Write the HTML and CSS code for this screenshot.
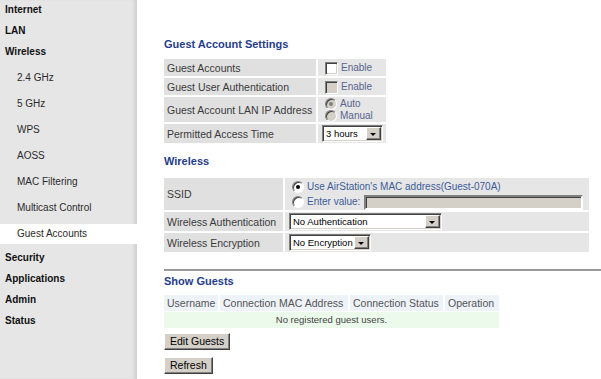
FILE: index.html
```html
<!DOCTYPE html>
<html lang="en">
<head>
    <meta charset="UTF-8" />
    <title>Guest Accounts - AirStation</title>
    <link rel="stylesheet" href="styles.css">
</head>
<body>
    <div class="page">
        <aside class="sidebar">
            <ul class="menu">
                <li class="menu-main">Internet</li>
                <li class="menu-main">LAN</li>
                <li class="menu-main">Wireless</li>
                <li class="menu-sub-list">
                    <ul>
                        <li class="menu-sub"><a>2.4 GHz</a></li>
                        <li class="menu-sub"><a>5 GHz</a></li>
                        <li class="menu-sub"><a>WPS</a></li>
                        <li class="menu-sub"><a>AOSS</a></li>
                        <li class="menu-sub"><a>MAC Filtering</a></li>
                        <li class="menu-sub"><a>Multicast Control</a></li>
                        <li class="menu-sub active"><a>Guest Accounts</a></li>
                    </ul>
                </li>
                <li class="menu-main">Security</li>
                <li class="menu-main">Applications</li>
                <li class="menu-main">Admin</li>
                <li class="menu-main">Status</li>
            </ul>
        </aside>

        <main class="content">
            <h2 class="section-title">Guest Account Settings</h2>
            <table class="settings guest-settings">
                <tr>
                    <td class="label">Guest Accounts</td>
                    <td class="value"><span class="check"></span><span class="opt">Enable</span></td>
                </tr>
                <tr>
                    <td class="label">Guest User Authentication</td>
                    <td class="value"><span class="check disabled"></span><span class="opt">Enable</span></td>
                </tr>
                <tr>
                    <td class="label">Guest Account LAN IP Address</td>
                    <td class="value value-radios">
                        <div class="radio-line"><span class="radio disabled checked"></span><span class="opt">Auto</span></div>
                        <div class="radio-line"><span class="radio disabled"></span><span class="opt">Manual</span></div>
                    </td>
                </tr>
                <tr>
                    <td class="label">Permitted Access Time</td>
                    <td class="value value-select">
                        <span class="select sel-hours"><span class="select-text">3 hours</span><span class="select-btn"></span></span>
                    </td>
                </tr>
            </table>

            <h2 class="section-title title-wireless">Wireless</h2>
            <table class="settings wireless-settings">
                <tr>
                    <td class="label">SSID</td>
                    <td class="value value-radios">
                        <div class="radio-line"><span class="radio checked"></span><span class="opt link">Use AirStation's MAC address(Guest-070A)</span></div>
                        <div class="radio-line"><span class="radio"></span><span class="opt link">Enter value:</span><span class="textbox"></span></div>
                    </td>
                </tr>
                <tr>
                    <td class="label">Wireless Authentication</td>
                    <td class="value value-select">
                        <span class="select sel-auth"><span class="select-text">No Authentication</span><span class="select-btn"></span></span>
                    </td>
                </tr>
                <tr>
                    <td class="label">Wireless Encryption</td>
                    <td class="value value-select">
                        <span class="select sel-enc"><span class="select-text">No Encryption</span><span class="select-btn"></span></span>
                    </td>
                </tr>
            </table>

            <hr class="divider">

            <h2 class="section-title title-guests">Show Guests</h2>
            <table class="guests">
                <colgroup>
                    <col class="col-user">
                    <col class="col-mac">
                    <col class="col-status">
                    <col class="col-op">
                </colgroup>
                <tr class="guests-head">
                    <th>Username</th>
                    <th>Connection MAC Address</th>
                    <th>Connection Status</th>
                    <th>Operation</th>
                </tr>
                <tr class="guests-empty">
                    <td colspan="4">No registered guest users.</td>
                </tr>
            </table>

            <div class="actions">
                <button class="btn">Edit Guests</button>
                <button class="btn">Refresh</button>
            </div>
        </main>
    </div>
</body>
</html>
```

FILE: styles.css
```css
:root {
    --sidebar-bg: #e6e6e6;
    --heading-color: #1f3d8c;
    --label-bg: #e0e0e0;
    --value-bg: #e6e6e6;
    --text-color: #333333;
    --opt-color: #56648e;
    --face: #d4d0c8;
}
html, body {
    margin: 0;
    height: 100%;
}
body {
    font-family: "Liberation Sans", Arial, sans-serif;
    color: var(--text-color);
    background: #ffffff;
    overflow: hidden;
}
.page {
    display: flex;
    height: 379px;
}

/* sidebar */
.sidebar {
    width: 137px;
    flex-shrink: 0;
    background-color: var(--sidebar-bg);
    box-shadow: inset -4px 0 3px -1px #d2d2d2;
}
.menu, .menu ul {
    list-style: none;
    margin: 0;
    padding: 0;
}
.menu {
    margin-top: -1px;
}
.menu-main {
    font-size: 10px;
    font-weight: bold;
    color: #111;
    line-height: 21px;
    padding-left: 5px;
}
.menu-sub-list {
    padding-top: 3px;
}
.menu-sub {
    padding: 3px 0;
    font-size: 10px;
    color: #2a2a2a;
}
.menu-sub a {
    display: block;
    line-height: 20px;
    padding-left: 17px;
}
.menu-sub.active a {
    background-color: #ffffff;
}

/* content */
.content {
    flex: 1;
    padding: 37px 0 0 25px;
    font-size: 10.5px;
    white-space: nowrap;
}
.section-title {
    font-size: 11px;
    font-weight: bold;
    color: var(--heading-color);
    line-height: 14px;
    margin: 0 0 6px 2px;
}
.title-wireless {
    margin-top: 9px;
    margin-bottom: 8px;
}
.title-guests {
    margin-bottom: 7px;
}
.settings {
    border-collapse: separate;
    border-spacing: 2px;
    table-layout: fixed;
}
.settings td {
    padding: 1px 4px;
    line-height: 14px;
    vertical-align: middle;
    overflow: hidden;
}
.settings .label {
    background-color: var(--label-bg);
    color: #3a3a3a;
    padding-left: 3px;
}
.settings .value {
    background-color: var(--value-bg);
    padding-left: 4px;
}
.settings .value-radios {
    padding-top: 1px;
    padding-bottom: 0;
}
.settings .value-select {
    padding-top: 1px;
    padding-bottom: 1px;
}
.guest-settings { width: 226px; }
.guest-settings .label { width: 145px; }
.guest-settings .value { width: 60px; }
.wireless-settings { width: 429px; }
.wireless-settings .label { width: 112px; }
.wireless-settings .value { width: 296px; }

.opt {
    color: var(--opt-color);
    font-size: 10px;
}
.opt.link {
    color: #3e5c98;
}
.radio-line {
    display: flex;
    align-items: center;
    height: 12px;
}
.wireless-settings .radio-line {
    height: 15px;
}
.wireless-settings .radio-line + .radio-line {
    height: 16px;
}

/* classic form controls */
.check {
    display: inline-block;
    width: 11px;
    height: 11px;
    margin: 0 3px 0 3px;
    vertical-align: middle;
    background: #ffffff;
    border: 1px solid;
    border-color: #808080 #ffffff #ffffff #808080;
    box-shadow: inset 1px 1px #404040, inset -1px -1px var(--face);
}
.check.disabled {
    background: var(--face);
}
.radio {
    position: relative;
    flex-shrink: 0;
    width: 10px;
    height: 10px;
    margin: 0 3px;
    border-radius: 50%;
    background: #ffffff;
    border: 1px solid;
    border-color: #808080 #ffffff #ffffff #808080;
    box-shadow: inset 1px 1px #404040;
}
.radio.disabled {
    background: var(--face);
}
.radio.checked::after {
    content: "";
    position: absolute;
    left: 3px;
    top: 3px;
    width: 4px;
    height: 4px;
    border-radius: 50%;
    background: #000;
}
.radio.disabled.checked::after {
    background: #808080;
}
.textbox {
    flex: 1;
    height: 11px;
    margin: 0 2px 0 4px;
    background: var(--face);
    border: 2px solid;
    border-color: #808080 #ffffff #ffffff #808080;
    box-shadow: inset 1px 1px #404040;
}
.select {
    display: flex;
    box-sizing: border-box;
    height: 17px;
    background: #ffffff;
    border: 1px solid;
    border-color: #808080 #ffffff #ffffff #808080;
    box-shadow: inset 1px 1px #404040, inset -1px -1px var(--face);
    padding: 1px;
}
.select-text {
    flex: 1;
    padding-left: 2px;
    font-size: 9.5px;
    line-height: 13px;
    color: #000;
    overflow: hidden;
}
.select-btn {
    position: relative;
    width: 13px;
    flex-shrink: 0;
    background: var(--face);
    border: 1px solid;
    border-color: #ffffff #404040 #404040 #ffffff;
    box-shadow: inset -1px -1px #808080;
}
.select-btn::after {
    content: "";
    position: absolute;
    left: 3px;
    top: 5px;
    border-left: 3px solid transparent;
    border-right: 3px solid transparent;
    border-top: 3px solid #000;
}
.sel-hours { width: 61px; }
.sel-auth { width: 153px; }
.sel-enc { width: 82px; }

.divider {
    border: 0;
    height: 2px;
    background: #9a9a9a;
    margin: 15px 0 3px 2px;
}

/* guests table */
.guests {
    border-collapse: separate;
    border-spacing: 2px 0;
    table-layout: fixed;
    width: 339px;
}
.col-user { width: 54px; }
.col-mac { width: 128px; }
.col-status { width: 93px; }
.col-op { width: 54px; }
.guests th {
    font-weight: normal;
    background: #eef2f9;
    color: #555;
    font-size: 10.5px;
    line-height: 13px;
    padding: 2px 0 1px 3px;
    border-bottom: 1px solid #ffffff;
    text-align: left;
    overflow: hidden;
}
.guests-empty td {
    background: #ebfaea;
    text-align: center;
    font-size: 9.5px;
    line-height: 14px;
    color: #444;
}

.actions {
    display: flex;
    flex-direction: column;
    align-items: flex-start;
    gap: 7px;
    margin: 5px 0 0 2px;
}
.btn {
    font-family: "Liberation Sans", Arial, sans-serif;
    font-size: 10.5px;
    color: #000;
    height: 17px;
    line-height: 13px;
    padding: 0 5px;
    background: var(--face);
    border: 1px solid;
    border-color: #ffffff #404040 #404040 #ffffff;
    box-shadow: inset -1px -1px #808080;
    border-radius: 0;
}
```
